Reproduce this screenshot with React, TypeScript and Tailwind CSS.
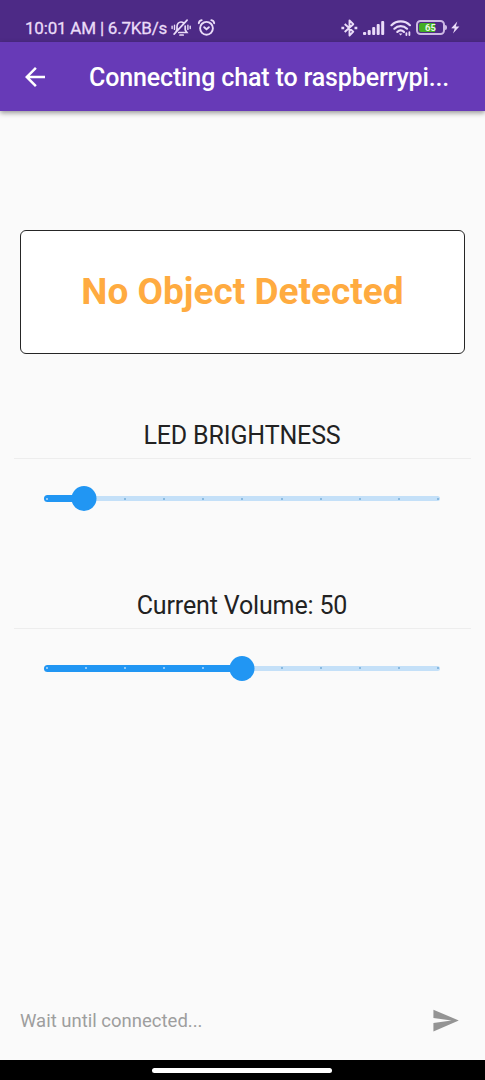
import React from "react";

function StatusBar() {
  return (
    <div className="flex h-[42px] shrink-0 items-end justify-between bg-[#4d2a86] pr-[24px] pl-[25px] text-[#eadcf8]">
      <div className="flex h-[29px] items-center">
        <span className="w-[146px] pt-[2px] text-[17px] leading-[27px] font-normal tracking-[-0.2px] whitespace-nowrap [-webkit-text-stroke:0.3px]">
          10:01 AM | 6.7KB/s
        </span>
        <svg className="h-[20px] w-[20px]" viewBox="0 0 20 20" fill="none" stroke="currentColor" strokeWidth="1.7" strokeLinecap="round">
          <path d="M5 13.6 6 11.8V8.5C6 5.8 7.8 4 10 4c1 0 1.7.2 2.4.7M14.2 8v4l1.7 2.5H7.8M9 17h3.2M16.1 2.2 3.1 16.1" />
          <path d="M3.5 7.2v4.2M1.1 8.2v2.3M16.9 7.2v4.2M19.2 8.2v2.3" strokeWidth="1.4" />
        </svg>
        <svg className="ml-[6px] h-[20px] w-[19px]" viewBox="0 0 19 20" fill="none" stroke="currentColor" strokeWidth="1.9" strokeLinecap="round">
          <circle cx="9.5" cy="10.3" r="6.4" />
          <path d="M1.8 5.2C2 3.5 3 2.6 4.7 2.2M14.3 2.2c1.7.4 2.7 1.3 2.9 3M7.2 9.2l2.3 2 2.4-2" />
        </svg>
      </div>
      <div className="flex h-[29px] items-center">
        <svg className="h-[18px] w-[17px]" viewBox="0 0 17 18" fill="none" stroke="currentColor" strokeWidth="1.9" strokeLinejoin="round">
          <path d="m3.7 5 8.6 7.7L8.5 16.6V1.4l3.8 3.8-8.6 7.8" />
          <path d="M.4 9h2.8M13.5 9h2.8" strokeWidth="2.4" />
        </svg>
        <svg className="ml-[5px] h-[16px] w-[22px]" viewBox="0 0 22 16" fill="currentColor">
          <rect x="0" y="12" width="3.2" height="3" rx="1" />
          <rect x="4.7" y="10" width="3" height="5" rx="1" />
          <rect x="9.2" y="7" width="3" height="8" rx="1" />
          <rect x="13.7" y="4" width="3" height="11" rx="1" />
          <rect x="18.2" y="1" width="3" height="14" rx="1" />
        </svg>
        <svg className="ml-[5px] h-[18px] w-[22px]" viewBox="0 0 22 18" fill="none" stroke="currentColor" strokeWidth="2.2" strokeLinecap="round">
          <path d="M1.5 6.2c5.2-5 13.2-5 18.4 0M4.4 9.7c3.6-3.4 9-3.4 12.6 0M7.4 12.9c1.9-1.7 4.6-1.7 6.5 0" />
          <path d="M8.8 14.6h3.6l-1.8 2z" fill="currentColor" stroke="none" />
          <path d="M16.4 14.2v1.9M19.4 13.2v2.9" strokeWidth="1.8" />
        </svg>
        <div className="ml-[4px] flex h-[15px] w-[29px] items-center rounded-[4.5px] border-2 border-[#cdb9e4] p-[1px]">
          <div className="relative flex h-full w-full items-center justify-center overflow-hidden rounded-[2px] bg-[#4d2a86]">
            <div className="absolute inset-y-0 left-0 w-[16px] bg-[#43ad24]" />
            <span className="relative text-[9.5px] leading-none font-bold text-[#eaf6e4]">65</span>
          </div>
        </div>
        <div className="h-[5px] w-[2px] rounded-r-sm bg-[#cdb9e4]" />
        <svg className="ml-[4px] h-[13px] w-[9px]" viewBox="0 0 9 13" fill="currentColor">
          <path d="M6.3.6.2 7.3l3.5.1L2 12.5l6.4-7-3.6-.1z" />
        </svg>
        <div className="w-px" />
      </div>
    </div>
  );
}

function AppBar() {
  return (
    <header className="relative z-10 flex h-[69px] shrink-0 items-center bg-[#673ab7] text-white shadow-[0_2px_5px_rgba(0,0,0,0.4)]">
      <svg className="ml-[20px] h-[30px] w-[30px]" viewBox="0 0 24 24" fill="currentColor">
        <path d="M20 11H7.83l5.59-5.59L12 4l-8 8 8 8 1.41-1.41L7.83 13H20v-2z" />
      </svg>
      <h1 className="ml-[39px] pt-[3px] text-[25px] leading-[30px] font-medium tracking-[-0.14px] whitespace-nowrap">
        Connecting chat to raspberrypi...
      </h1>
    </header>
  );
}

const STEPS = [0, 1, 2, 3, 4, 5, 6, 7, 8, 9, 10];

function Slider({ value }: { value: number }) {
  return (
    <div className="relative mr-[45px] ml-[44px] flex h-[25px] items-center">
      <div className="h-[5px] w-full rounded-full bg-[#c4e0f8]" />
      <div
        className="absolute left-0 h-[7px] rounded-full bg-[#2196f3]"
        style={{ width: `${value * 10}%` }}
      />
      <div className="absolute right-[1px] left-[2px] flex items-center justify-between">
        {STEPS.map((step) => (
          <span
            key={step}
            className={
              step < value
                ? "h-[2px] w-[2px] rounded-full bg-[#b4dafb]"
                : "h-[2px] w-[2px] rounded-full bg-[#74acd9]"
            }
          />
        ))}
      </div>
      <div
        className="absolute h-[25px] w-[25px] -translate-x-1/2 rounded-full bg-[#2196f3]"
        style={{ left: `${value * 10}%` }}
      />
    </div>
  );
}

function Control({ label, value }: { label: string; value: number }) {
  return (
    <section className="h-[169.5px]">
      <h2 className="pt-px pr-px text-center text-[25px] leading-[30px] font-normal tracking-[-0.15px] whitespace-nowrap text-[#222]">
        {label}
      </h2>
      <div className="mx-[14px] mt-[7px] h-px bg-[#ededed]" />
      <div className="mt-[27px]">
        <Slider value={value} />
      </div>
    </section>
  );
}

export default function App() {
  return (
    <div className="flex h-[1080px] w-[485px] flex-col overflow-hidden bg-[#fafafa] font-['Roboto',sans-serif]">
      <StatusBar />
      <AppBar />
      <main className="flex flex-1 flex-col">
        <div className="mx-[20px] mt-[119px] flex h-[124px] items-center justify-center rounded-[6px] border border-[#262626] bg-white">
          <p className="text-[37px] leading-[44px] font-bold whitespace-nowrap text-[#ffab40]">
            No Object Detected
          </p>
        </div>
        <div className="mt-[66px]">
          <Control label="LED BRIGHTNESS" value={1} />
          <Control label="Current Volume: 50" value={5} />
        </div>
        <div className="mt-auto mb-[24px] flex h-[30px] items-center justify-between pr-[25px] pl-[20px]">
          <span className="text-[18.5px] leading-[30px] whitespace-nowrap text-[#9e9e9e]">
            Wait until connected...
          </span>
          <svg className="mb-[2px] h-[29px] w-[29px]" viewBox="0 0 24 24" fill="#949494">
            <path d="M2.01 21 23 12 2.01 3 2 10l15 2-15 2z" />
          </svg>
        </div>
      </main>
      <footer className="flex h-[20px] shrink-0 items-center justify-center bg-black">
        <div className="mr-px h-[5px] w-[180px] rounded-full bg-white" />
      </footer>
    </div>
  );
}
